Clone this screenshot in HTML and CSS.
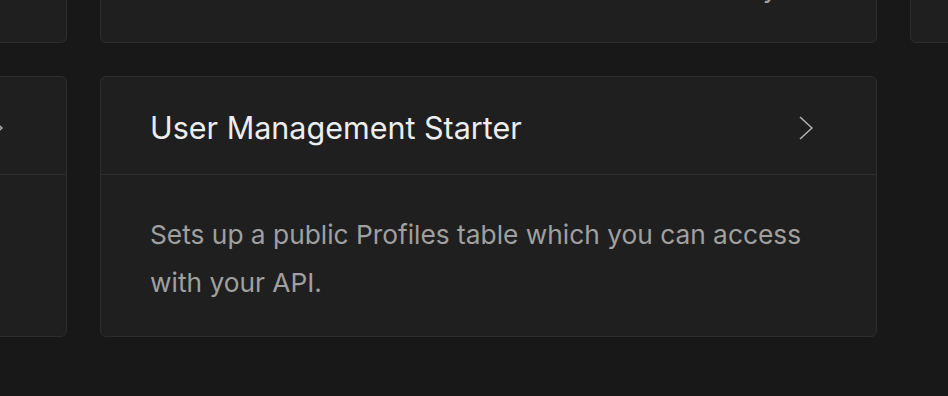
FILE: index.html
```html
<!DOCTYPE html>
<html lang="en">
<head>
    <meta charset="UTF-8">
    <meta name="viewport" content="width=device-width, initial-scale=1.0">
    <title>Quickstarts</title>
    <link rel="stylesheet" href="styles.css">
</head>
<body>
    <div class="grid">
        <!-- top row, mostly scrolled out of view -->
        <div class="card">
            <div class="card-head">
                <h3>Todo List</h3>
                <svg class="chev" viewBox="0 0 14 24"><polyline points="1,1 13,12 1,23"/></svg>
            </div>
            <div class="card-body"><p>Build a basic todo list with Row Level Security.</p></div>
        </div>
        <div class="card">
            <div class="card-head">
                <h3>Countries</h3>
                <svg class="chev" viewBox="0 0 14 24"><polyline points="1,1 13,12 1,23"/></svg>
            </div>
            <div class="card-body"><p>Creates a table with every country in the world,<br>ISO codes and the detailed timeline of their history</p></div>
        </div>
        <div class="card">
            <div class="card-head">
                <h3>Slack Clone</h3>
                <svg class="chev" viewBox="0 0 14 24"><polyline points="1,1 13,12 1,23"/></svg>
            </div>
            <div class="card-body"><p>Build the database schema for a Slack clone.</p></div>
        </div>

        <!-- second row -->
        <div class="card">
            <div class="card-head">
                <h3>Stripe Subscriptions</h3>
                <svg class="chev" viewBox="0 0 14 24"><polyline points="1,1 13,12 1,23"/></svg>
            </div>
            <div class="card-body"><p>Sets up a database for managing subscriptions.</p></div>
        </div>
        <div class="card">
            <div class="card-head">
                <h3>User Management Starter</h3>
                <svg class="chev" viewBox="0 0 14 24"><polyline points="1,1 13,12 1,23"/></svg>
            </div>
            <div class="card-body"><p>Sets up a public Profiles table which you can access with your API.</p></div>
        </div>
    </div>
</body>
</html>
```
FILE: styles.css
```css
* { box-sizing: border-box; }
html, body { margin: 0; padding: 0; }
body {
    background: #181818;
    font-family: Inter, "Noto Sans", sans-serif;
    overflow: hidden;
    height: 396px;
}
.grid {
    display: grid;
    grid-template-columns: repeat(3, 777px);
    grid-template-rows: 261px 261px;
    gap: 33px;
    margin-left: -710px;
    margin-top: -218px;
}
.card {
    background: #1f1f1f;
    border: solid 1px #2d2d2d;
    border-radius: 6px;
    overflow: hidden;
}
.card-head {
    display: flex;
    align-items: center;
    justify-content: space-between;
    padding: 32px 63px 28px 49px;
    border-bottom: solid 1px #2d2d2d;
}
.card-head h3 {
    margin: 0;
    font-size: 30.5px;
    line-height: 37px;
    font-weight: 400;
    color: #ededed;
}
.chev {
    width: 14px;
    height: 24px;
    fill: none;
    stroke: #b4b4b4;
    stroke-width: 1.5;
}
.card-body {
    padding: 36px 49px 0;
}
.card-body p {
    margin: 0;
    font-size: 26.3px;
    line-height: 48px;
    color: #a0a0a0;
}
```
